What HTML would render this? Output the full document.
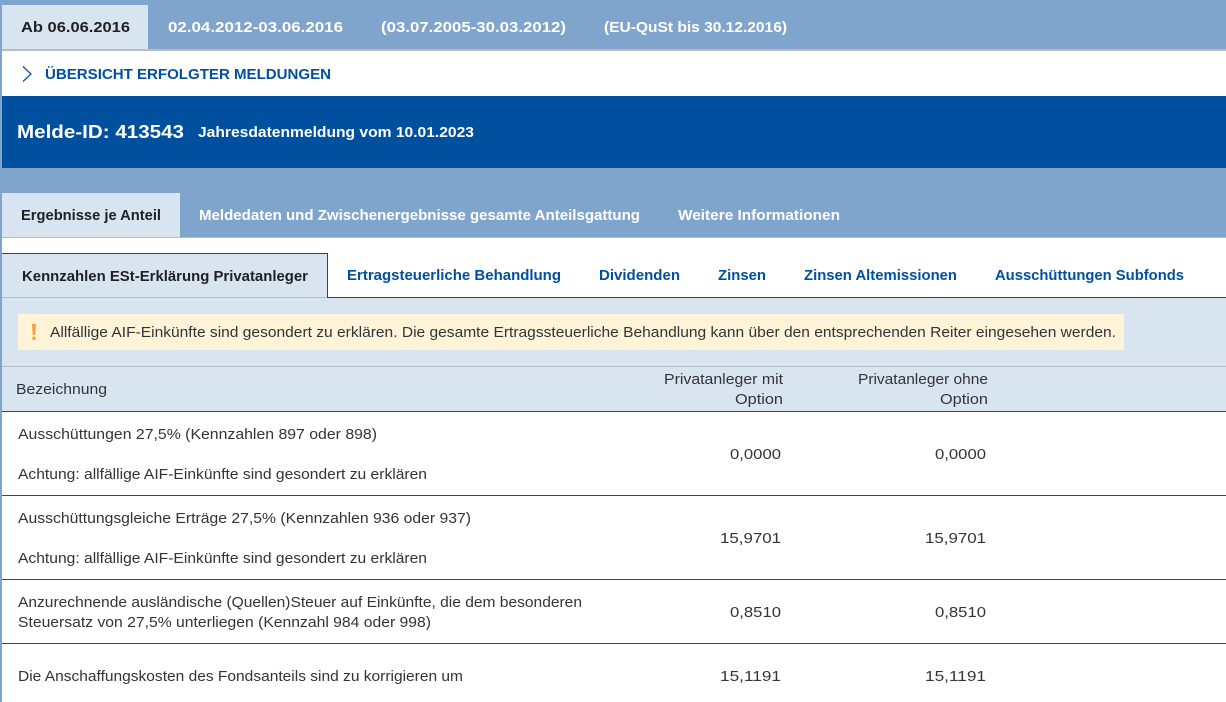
<!DOCTYPE html>
<html lang="de"><head><meta charset="utf-8"><title>Meldung</title>
<style>
html,body{margin:0;padding:0;background:#fff;width:1226px;height:702px;overflow:hidden}
svg{display:block}
text{font-family:"Liberation Sans",sans-serif;font-size:14.5px;fill:#333338}
.b{font-weight:700}
.w{fill:#fff;font-weight:700}
.l{fill:#00509f;font-weight:700}
.k{fill:#1f1f24;font-weight:700}
</style></head><body>
<svg width="1226" height="702" viewBox="0 0 1226 702" xmlns="http://www.w3.org/2000/svg">
<rect width="1226" height="702" fill="#fff"/>
<rect x="0" y="0" width="2" height="702" fill="#80a5cd"/>
<!-- top band -->
<rect x="0" y="0" width="1226" height="50" fill="#80a5cd"/>
<rect x="2" y="5" width="146" height="44" fill="#d8e4f0"/>
<rect x="2" y="49" width="1224" height="2" fill="#b8bcc0"/>
<text x="21" y="32" class="k" textLength="109" lengthAdjust="spacingAndGlyphs">Ab 06.06.2016</text>
<text x="168" y="32" class="w" textLength="175" lengthAdjust="spacingAndGlyphs">02.04.2012-03.06.2016</text>
<text x="381" y="32" class="w" textLength="185" lengthAdjust="spacingAndGlyphs">(03.07.2005-30.03.2012)</text>
<text x="604" y="32" class="w" textLength="183" lengthAdjust="spacingAndGlyphs">(EU-QuSt bis 30.12.2016)</text>
<!-- overview -->
<path d="M23 66.5 L31 74 L23 81.5" fill="none" stroke="#00509f" stroke-width="1.2"/>
<text x="45" y="79" class="l" textLength="286" lengthAdjust="spacingAndGlyphs">ÜBERSICHT ERFOLGTER MELDUNGEN</text>
<!-- id bar -->
<rect x="2" y="96" width="1224" height="72" fill="#00509f"/>
<text x="17" y="138" class="w" style="font-size:18px" textLength="167" lengthAdjust="spacingAndGlyphs">Melde-ID: 413543</text>
<text x="198" y="137" class="w" textLength="276" lengthAdjust="spacingAndGlyphs">Jahresdatenmeldung vom 10.01.2023</text>
<!-- band 2 -->
<rect x="0" y="168" width="1226" height="70" fill="#80a5cd"/>
<rect x="2" y="193" width="178" height="44" fill="#d8e4f0"/>
<rect x="2" y="237" width="1224" height="1" fill="#b8bcc0"/>
<text x="21" y="220" class="k" textLength="140" lengthAdjust="spacingAndGlyphs">Ergebnisse je Anteil</text>
<text x="199" y="220" class="w" textLength="441" lengthAdjust="spacingAndGlyphs">Meldedaten und Zwischenergebnisse gesamte Anteilsgattung</text>
<text x="678" y="220" class="w" textLength="162" lengthAdjust="spacingAndGlyphs">Weitere Informationen</text>
<!-- subtabs -->
<rect x="2" y="253" width="325" height="45" fill="#d8e4f0"/>
<rect x="2" y="253" width="326" height="1" fill="#00509f"/>
<rect x="327" y="253" width="1" height="45" fill="#00509f"/>
<rect x="328" y="297" width="898" height="1" fill="#00509f"/>
<text x="22" y="281" class="k" textLength="286" lengthAdjust="spacingAndGlyphs">Kennzahlen ESt-Erklärung Privatanleger</text>
<text x="347" y="280" class="l" textLength="214" lengthAdjust="spacingAndGlyphs">Ertragsteuerliche Behandlung</text>
<text x="599" y="280" class="l" textLength="81" lengthAdjust="spacingAndGlyphs">Dividenden</text>
<text x="718" y="280" class="l" textLength="48" lengthAdjust="spacingAndGlyphs">Zinsen</text>
<text x="804" y="280" class="l" textLength="153" lengthAdjust="spacingAndGlyphs">Zinsen Altemissionen</text>
<text x="995" y="280" class="l" textLength="189" lengthAdjust="spacingAndGlyphs">Ausschüttungen Subfonds</text>
<!-- panel -->
<rect x="2" y="298" width="1224" height="113" fill="#d8e4f0"/>
<rect x="2" y="297" width="325" height="1" fill="#b8bcc0"/>
<rect x="18" y="314" width="1106" height="36" fill="#fff4d8"/>
<path d="M32 324 h4 l-0.8 11 h-2.4 z" fill="#f7a233"/>
<rect x="32.5" y="336.5" width="3" height="3.5" fill="#f7a233"/>
<text x="50" y="337" textLength="1066" lengthAdjust="spacingAndGlyphs">Allfällige AIF-Einkünfte sind gesondert zu erklären. Die gesamte Ertragssteuerliche Behandlung kann über den entsprechenden Reiter eingesehen werden.</text>
<rect x="2" y="366" width="1224" height="1" fill="#b8bcc0"/>
<text x="16" y="394" textLength="91" lengthAdjust="spacingAndGlyphs">Bezeichnung</text>
<text x="664" y="384" textLength="119" lengthAdjust="spacingAndGlyphs">Privatanleger mit</text>
<text x="735" y="404" textLength="48" lengthAdjust="spacingAndGlyphs">Option</text>
<text x="858" y="384" textLength="130" lengthAdjust="spacingAndGlyphs">Privatanleger ohne</text>
<text x="940" y="404" textLength="48" lengthAdjust="spacingAndGlyphs">Option</text>
<rect x="2" y="411" width="1224" height="1" fill="#134f8e"/>
<!-- rows -->
<text x="18" y="439" textLength="359" lengthAdjust="spacingAndGlyphs">Ausschüttungen 27,5% (Kennzahlen 897 oder 898)</text>
<text x="18" y="479" textLength="409" lengthAdjust="spacingAndGlyphs">Achtung: allfällige AIF-Einkünfte sind gesondert zu erklären</text>
<text x="730" y="459" textLength="51" lengthAdjust="spacingAndGlyphs">0,0000</text>
<text x="935" y="459" textLength="51" lengthAdjust="spacingAndGlyphs">0,0000</text>
<rect x="2" y="495" width="1224" height="1" fill="#134f8e"/>
<text x="18" y="523" textLength="453" lengthAdjust="spacingAndGlyphs">Ausschüttungsgleiche Erträge 27,5% (Kennzahlen 936 oder 937)</text>
<text x="18" y="563" textLength="409" lengthAdjust="spacingAndGlyphs">Achtung: allfällige AIF-Einkünfte sind gesondert zu erklären</text>
<text x="720" y="543" textLength="61" lengthAdjust="spacingAndGlyphs">15,9701</text>
<text x="925" y="543" textLength="61" lengthAdjust="spacingAndGlyphs">15,9701</text>
<rect x="2" y="579" width="1224" height="1" fill="#134f8e"/>
<text x="18" y="607" textLength="564" lengthAdjust="spacingAndGlyphs">Anzurechnende ausländische (Quellen)Steuer auf Einkünfte, die dem besonderen</text>
<text x="18" y="627" textLength="413" lengthAdjust="spacingAndGlyphs">Steuersatz von 27,5% unterliegen (Kennzahl 984 oder 998)</text>
<text x="730" y="617" textLength="51" lengthAdjust="spacingAndGlyphs">0,8510</text>
<text x="935" y="617" textLength="51" lengthAdjust="spacingAndGlyphs">0,8510</text>
<rect x="2" y="643" width="1224" height="1" fill="#134f8e"/>
<text x="18" y="681" textLength="445" lengthAdjust="spacingAndGlyphs">Die Anschaffungskosten des Fondsanteils sind zu korrigieren um</text>
<text x="720" y="681" textLength="61" lengthAdjust="spacingAndGlyphs">15,1191</text>
<text x="925" y="681" textLength="61" lengthAdjust="spacingAndGlyphs">15,1191</text>
</svg>
</body></html>
